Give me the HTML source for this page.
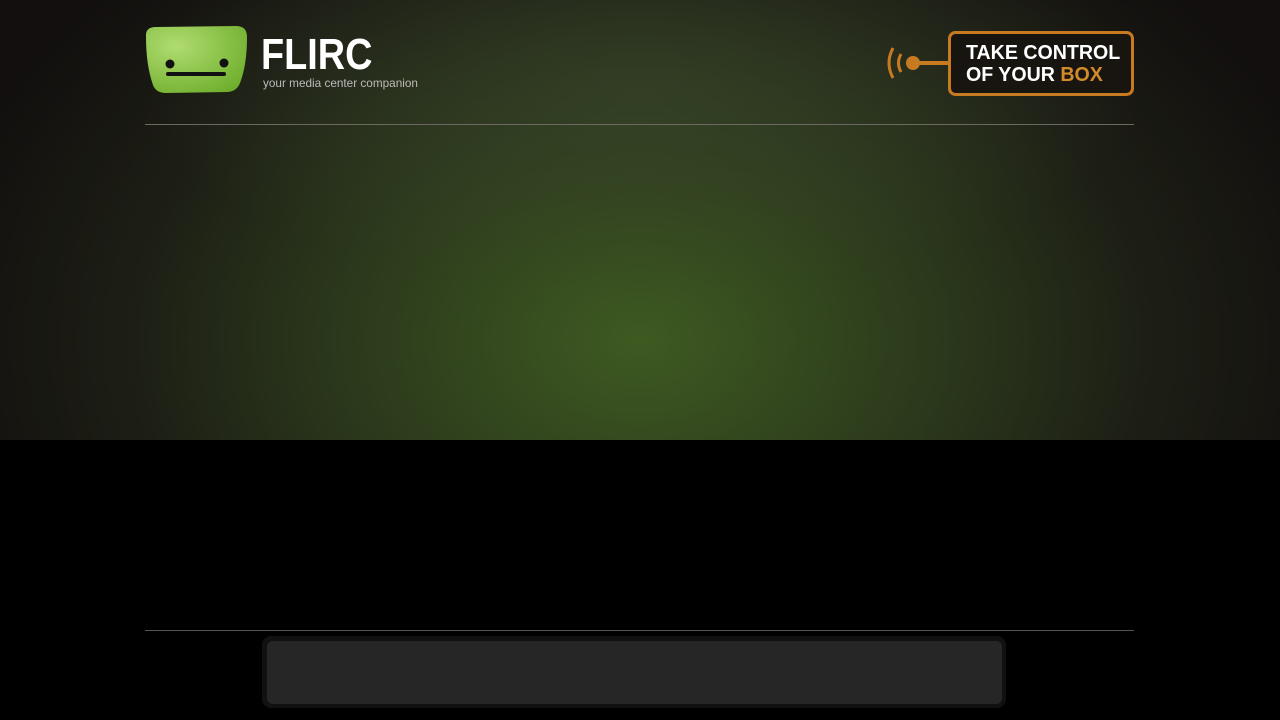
<!DOCTYPE html>
<html><head><meta charset="utf-8"><style>
html,body{margin:0;padding:0;width:1280px;height:720px;overflow:hidden;background:#000;font-family:"Liberation Sans",sans-serif}
#top{position:absolute;left:0;top:0;width:1280px;height:440px;background:radial-gradient(ellipse 500px 200px at 640px 90px,rgba(60,72,45,0.55) 0%,rgba(60,72,45,0) 100%),radial-gradient(ellipse 720px 520px at 640px 340px,#3e5a21 0%,#2c3a1c 40%,#1d1f15 70%,#120f0e 100%)}
.line{position:absolute;left:145px;width:989px;height:1px}
.t{position:absolute;color:#fff;font-weight:bold;white-space:nowrap}
</style></head><body>
<div id="top"></div>
<div class="line" style="top:124px;background:#6a6a60"></div>
<div class="line" style="top:630px;background:#555"></div>
<svg style="position:absolute;left:144px;top:25px" width="106" height="70" viewBox="0 0 106 70">
<defs><radialGradient id="g" cx="0.3" cy="0.3" r="0.9"><stop offset="0" stop-color="#b0dc70"/><stop offset="1" stop-color="#6aab28"/></radialGradient></defs>
<path d="M2,12 Q1,2 12,2 L92,1 Q103,1 103,12 Q103,40 96,58 Q93,66 84,67 L22,68 Q12,68 9,60 Q2,40 2,12 Z" fill="url(#g)"/>
<circle cx="26" cy="39" r="4.5" fill="#111"/><circle cx="80" cy="38" r="4.5" fill="#111"/>
<rect x="22" y="47" width="60" height="4" rx="2" fill="#111"/>
</svg>
<div class="t" style="left:261px;top:30px;font-size:44px;transform:scaleX(0.86);transform-origin:0 0">FLIRC</div>
<div class="t" style="left:263px;top:76px;font-size:12px;color:#bbb;font-weight:normal;transform:scaleX(0.98);transform-origin:0 0">your media center companion</div>
<svg style="position:absolute;left:884px;top:30px" width="252" height="68">
<path d="M9,18 Q1,33 9,48" stroke="#c87a20" stroke-width="3" fill="none"/>
<path d="M17,24 Q12,33 17,42" stroke="#c87a20" stroke-width="3" fill="none"/>
<circle cx="29" cy="33" r="7" fill="#c87a20"/>
<rect x="29" y="31" width="36" height="4" fill="#c87a20"/>
<rect x="65.5" y="2.5" width="183" height="62" rx="6" fill="#181511" stroke="#c87a20" stroke-width="3"/>
</svg>
<div class="t" style="left:966px;top:42px;font-size:20px;line-height:22px;transform:scaleX(0.98);transform-origin:0 0">TAKE CONTROL<br>OF YOUR <span style="color:#d38a2a">BOX</span></div>
<div style="position:absolute;left:262px;top:636px;width:744px;height:72px;background:#111;border-radius:9px"></div>
<div style="position:absolute;left:267px;top:641px;width:735px;height:63px;background:#262626;border-radius:6px"></div>
</body></html>
